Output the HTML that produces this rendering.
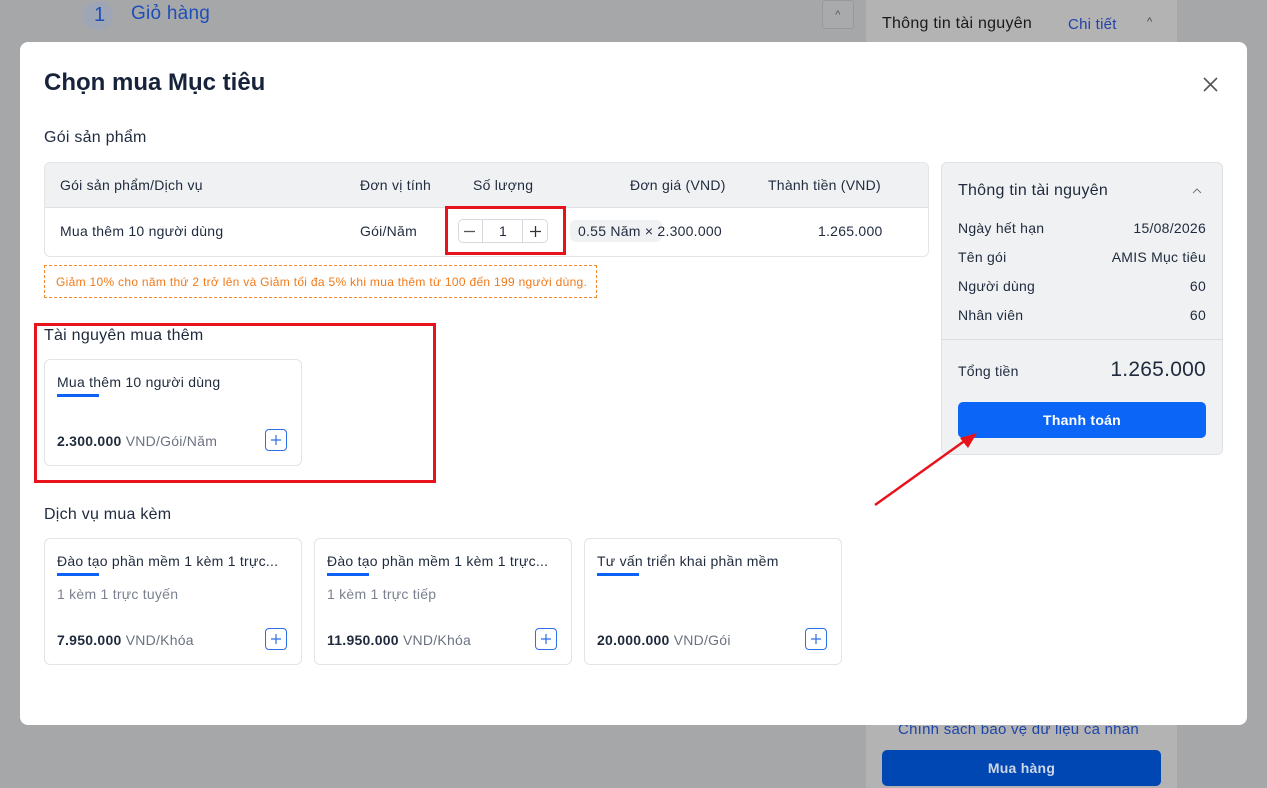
<!DOCTYPE html>
<html><head><meta charset="utf-8">
<style>
*{box-sizing:border-box;margin:0;padding:0}
body{width:1267px;height:788px;overflow:hidden;background:#a6a7a9;font-family:"Liberation Sans",sans-serif;color:#1f2a3d;position:relative;font-size:14px;letter-spacing:0.25px}
.a{position:absolute;white-space:nowrap}
.card{position:absolute;border:1px solid #e2e4e8;border-radius:6px;background:#fff}
.plus{position:absolute;width:22px;height:22px;border:1px solid #2c6fe6;border-radius:4px}
.plus svg{position:absolute;left:4px;top:4px}
.ul{position:absolute;height:3px;width:42px;background:#0b62f5}
</style></head><body>
<!-- background page -->
<div class="a" style="left:83px;top:1px;width:30px;height:29px;border-radius:50%;background:#9ea6b5"></div>
<div class="a" style="left:94px;top:4px;font-size:20px;color:#1d4fb8">1</div>
<div class="a" style="left:131px;top:3px;font-size:19px;color:#1d4fb8">Giỏ hàng</div>
<div class="a" style="left:822px;top:0;width:32px;height:29px;border:1px solid #999;border-radius:3px;background:#a9aaac;color:#555;text-align:center;font-size:11px;line-height:28px">^</div>
<div class="a" style="left:866px;top:0;width:311px;height:788px;background:#b3b3b3"></div>
<div class="a" style="left:882px;top:15px;font-size:16px;color:#1a1a1a">Thông tin tài nguyên</div>
<div class="a" style="left:1068px;top:16px;font-size:15px;color:#2342a8">Chi tiết</div>
<div class="a" style="left:1147px;top:16px;font-size:11px;color:#444">^</div>
<div class="a" style="left:898px;top:721px;font-size:15px;color:#1e45a8">Chính sách bảo vệ dữ liệu cá nhân</div>
<div class="a" style="left:882px;top:750px;width:279px;height:36px;background:#0047b3;border-radius:5px;color:#cfd6e6;text-align:center;line-height:37px;font-weight:bold;font-size:14px">Mua hàng</div>

<!-- modal -->
<div class="a" style="left:20px;top:42px;width:1227px;height:683px;background:#fff;border-radius:8px"></div>
<div class="a" style="left:44px;top:69px;font-size:24px;font-weight:bold;color:#17233a;letter-spacing:0">Chọn mua Mục tiêu</div>
<svg class="a" style="left:1202px;top:76px" width="17" height="17" viewBox="0 0 17 17"><path d="M2 2L15 15M15 2L2 15" stroke="#555" stroke-width="1.6"/></svg>
<div class="a" style="left:44px;top:129px;font-size:16px">Gói sản phẩm</div>

<div class="card" style="left:44px;top:162px;width:885px;height:95px;overflow:hidden">
 <div style="position:absolute;left:0;top:0;width:100%;height:45px;background:#f0f1f3;border-bottom:1px solid #dfe1e5"></div>
</div>
<div class="a" style="left:60px;top:177px">Gói sản phẩm/Dịch vụ</div>
<div class="a" style="left:360px;top:177px">Đơn vị tính</div>
<div class="a" style="left:473px;top:177px">Số lượng</div>
<div class="a" style="left:630px;top:177px">Đơn giá (VND)</div>
<div class="a" style="left:768px;top:177px">Thành tiền (VND)</div>
<div class="a" style="left:60px;top:223px">Mua thêm 10 người dùng</div>
<div class="a" style="left:360px;top:223px">Gói/Năm</div>
<div class="a" style="left:458px;top:219px;width:90px;height:24px;border:1px solid #d6d9de;border-radius:5px"></div>
<div class="a" style="left:482px;top:219px;width:1px;height:24px;background:#d6d9de"></div>
<div class="a" style="left:522px;top:219px;width:1px;height:24px;background:#d6d9de"></div>
<svg class="a" style="left:463px;top:225px" width="13" height="13" viewBox="0 0 13 13"><path d="M1 6.5H12" stroke="#555" stroke-width="1.3"/></svg>
<div class="a" style="left:499px;top:223px">1</div>
<svg class="a" style="left:529px;top:225px" width="13" height="13" viewBox="0 0 13 13"><path d="M1 6.5H12M6.5 1V12" stroke="#333" stroke-width="1.3"/></svg>
<div class="a" style="left:445px;top:206px;width:121px;height:49px;border:3px solid #e8121a"></div>
<div class="a" style="left:570px;top:220px;width:92px;height:22px;background:#f0f1f3;border-radius:6px"></div>
<div class="a" style="left:578px;top:223px">0.55 Năm × 2.300.000</div>
<div class="a" style="left:818px;top:223px">1.265.000</div>

<div class="a" style="left:44px;top:265px;width:553px;height:33px;border:1px dashed #f38b2b"></div>
<div class="a" style="left:56px;top:275px;font-size:12px;color:#f07a1a;letter-spacing:0.3px">Giảm 10% cho năm thứ 2 trở lên và Giảm tối đa 5% khi mua thêm từ 100 đến 199 người dùng.</div>

<div class="a" style="left:34px;top:323px;width:402px;height:160px;border:3px solid #e8121a"></div>
<div class="a" style="left:44px;top:327px;font-size:16px">Tài nguyên mua thêm</div>
<div class="card" style="left:44px;top:359px;width:258px;height:107px"></div>
<div class="a" style="left:57px;top:374px">Mua thêm 10 người dùng</div>
<div class="ul" style="left:57px;top:394px"></div>
<div class="a" style="left:57px;top:433px"><b>2.300.000</b> <span style="color:#6b7280">VND/Gói/Năm</span></div>
<div class="plus" style="left:265px;top:429px"><svg width="12" height="12" viewBox="0 0 12 12"><path d="M1 6H11M6 1V11" stroke="#2c6fe6" stroke-width="1.2"/></svg></div>

<div class="a" style="left:44px;top:506px;font-size:16px">Dịch vụ mua kèm</div>
<div class="card" style="left:44px;top:538px;width:258px;height:127px"></div>
<div class="card" style="left:314px;top:538px;width:258px;height:127px"></div>
<div class="card" style="left:584px;top:538px;width:258px;height:127px"></div>
<div class="a" style="left:57px;top:553px">Đào tạo phần mềm 1 kèm 1 trực...</div>
<div class="a" style="left:327px;top:553px">Đào tạo phần mềm 1 kèm 1 trực...</div>
<div class="a" style="left:597px;top:553px">Tư vấn triển khai phần mềm</div>
<div class="ul" style="left:57px;top:573px"></div>
<div class="ul" style="left:327px;top:573px"></div>
<div class="ul" style="left:597px;top:573px"></div>
<div class="a" style="left:57px;top:586px;color:#7b8190">1 kèm 1 trực tuyến</div>
<div class="a" style="left:327px;top:586px;color:#7b8190">1 kèm 1 trực tiếp</div>
<div class="a" style="left:57px;top:632px"><b>7.950.000</b> <span style="color:#6b7280">VND/Khóa</span></div>
<div class="a" style="left:327px;top:632px"><b>11.950.000</b> <span style="color:#6b7280">VND/Khóa</span></div>
<div class="a" style="left:597px;top:632px"><b>20.000.000</b> <span style="color:#6b7280">VND/Gói</span></div>
<div class="plus" style="left:265px;top:628px"><svg width="12" height="12" viewBox="0 0 12 12"><path d="M1 6H11M6 1V11" stroke="#2c6fe6" stroke-width="1.2"/></svg></div>
<div class="plus" style="left:535px;top:628px"><svg width="12" height="12" viewBox="0 0 12 12"><path d="M1 6H11M6 1V11" stroke="#2c6fe6" stroke-width="1.2"/></svg></div>
<div class="plus" style="left:805px;top:628px"><svg width="12" height="12" viewBox="0 0 12 12"><path d="M1 6H11M6 1V11" stroke="#2c6fe6" stroke-width="1.2"/></svg></div>

<!-- right summary -->
<div class="a" style="left:941px;top:162px;width:282px;height:293px;background:#f0f1f3;border:1px solid #dfe1e5;border-radius:6px"></div>
<div class="a" style="left:941px;top:339px;width:282px;height:1px;background:#dcdee2"></div>
<div class="a" style="left:958px;top:182px;font-size:16px">Thông tin tài nguyên</div>
<svg class="a" style="left:1192px;top:188px" width="10" height="6" viewBox="0 0 10 6"><path d="M1 5L5 1L9 5" stroke="#777" fill="none"/></svg>
<div class="a" style="left:958px;top:220px">Ngày hết hạn</div><div class="a" style="right:61px;top:220px">15/08/2026</div>
<div class="a" style="left:958px;top:249px">Tên gói</div><div class="a" style="right:61px;top:249px">AMIS Mục tiêu</div>
<div class="a" style="left:958px;top:278px">Người dùng</div><div class="a" style="right:61px;top:278px">60</div>
<div class="a" style="left:958px;top:307px">Nhân viên</div><div class="a" style="right:61px;top:307px">60</div>
<div class="a" style="left:958px;top:363px">Tổng tiền</div>
<div class="a" style="right:61px;top:358px;font-size:21px;font-weight:500">1.265.000</div>
<div class="a" style="left:958px;top:402px;width:248px;height:36px;background:#0b66f7;border-radius:5px;color:#fff;text-align:center;line-height:36px;font-weight:bold">Thanh toán</div>
<svg class="a" style="left:870px;top:430px" width="110" height="80" viewBox="0 0 110 80"><path d="M5 75L100 7" stroke="#e8121a" stroke-width="2.5"/><path d="M107 3L90 8L98 18Z" fill="#e8121a"/></svg>
</body></html>
